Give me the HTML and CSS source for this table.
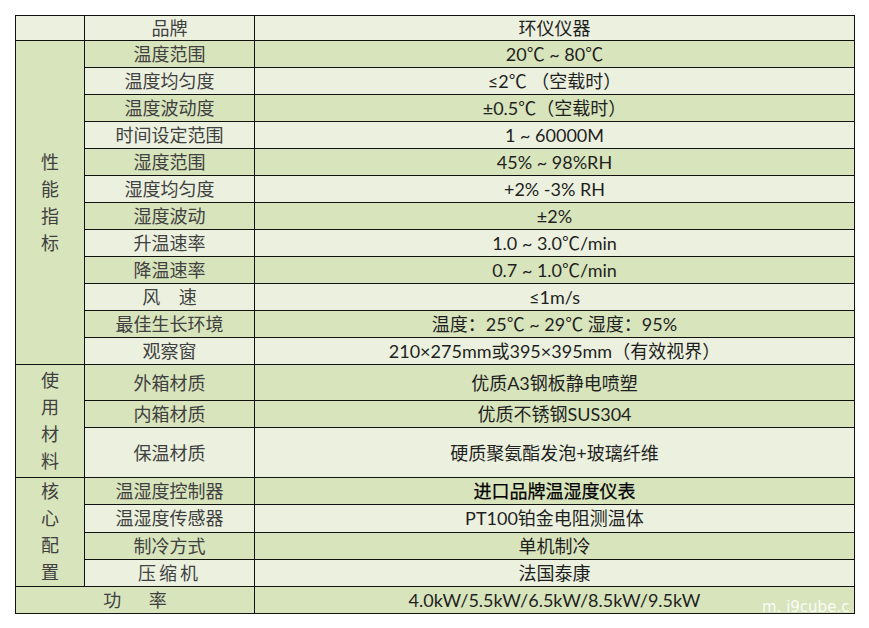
FILE: index.html
```html
<!DOCTYPE html>
<html lang="zh">
<head>
<meta charset="utf-8">
<link rel="stylesheet" href="styles.css">
</head>
<body>
<div class="page">
<table class="spec">
  <colgroup><col class="c1"><col class="c2"><col class="c3"></colgroup>
  <tr class="h25 lt"><td class="grp"></td><td class="lbl">品牌</td><td class="val">环仪仪器</td></tr>
  <tr class="dk"><td class="grp" rowspan="12"><div class="stack"><span>性</span><span>能</span><span>指</span><span>标</span></div></td><td class="lbl">温度范围</td><td class="val">20℃ ~ 80℃</td></tr>
  <tr class="lt"><td class="lbl">温度均匀度</td><td class="val">≤2℃ （空载时）</td></tr>
  <tr class="dk"><td class="lbl">温度波动度</td><td class="val">±0.5℃（空载时）</td></tr>
  <tr class="lt"><td class="lbl">时间设定范围</td><td class="val">1 ~ 60000M</td></tr>
  <tr class="dk"><td class="lbl">湿度范围</td><td class="val">45% ~ 98%RH</td></tr>
  <tr class="lt"><td class="lbl">湿度均匀度</td><td class="val">+2% -3% RH</td></tr>
  <tr class="dk"><td class="lbl">湿度波动</td><td class="val">±2%</td></tr>
  <tr class="lt"><td class="lbl">升温速率</td><td class="val">1.0 ~ 3.0℃/min</td></tr>
  <tr class="dk"><td class="lbl">降温速率</td><td class="val">0.7 ~ 1.0℃/min</td></tr>
  <tr class="lt"><td class="lbl">风&nbsp;&nbsp;&nbsp;&nbsp;速</td><td class="val">≤1m/s</td></tr>
  <tr class="dk"><td class="lbl">最佳生长环境</td><td class="val">温度：25℃ ~ 29℃ 湿度：95%</td></tr>
  <tr class="lt"><td class="lbl">观察窗</td><td class="val">210×275mm或395×395mm（有效视界）</td></tr>
  <tr class="dk h36"><td class="grp" rowspan="3"><div class="stack"><span>使</span><span>用</span><span>材</span><span>料</span></div></td><td class="lbl">外箱材质</td><td class="val">优质A3钢板静电喷塑</td></tr>
  <tr class="dk"><td class="lbl">内箱材质</td><td class="val">优质不锈钢SUS304</td></tr>
  <tr class="lt h50"><td class="lbl">保温材质</td><td class="val">硬质聚氨酯发泡+玻璃纤维</td></tr>
  <tr class="dk"><td class="grp" rowspan="4"><div class="stack"><span>核</span><span>心</span><span>配</span><span>置</span></div></td><td class="lbl">温湿度控制器</td><td class="val strong">进口品牌温湿度仪表</td></tr>
  <tr class="lt"><td class="lbl">温湿度传感器</td><td class="val">PT100铂金电阻测温体</td></tr>
  <tr class="dk"><td class="lbl">制冷方式</td><td class="val">单机制冷</td></tr>
  <tr class="lt"><td class="lbl spaced">压缩机</td><td class="val">法国泰康</td></tr>
  <tr class="dk"><td class="lbl" colspan="2">功&nbsp;&nbsp;&nbsp;&nbsp;&nbsp;&nbsp;率</td><td class="val">4.0kW/5.5kW/6.5kW/8.5kW/9.5kW</td></tr>
</table>
<div class="mark">m. i9cube.c</div>
</div>
</body>
</html>
```

FILE: styles.css
```css
html, body {
  margin: 0;
  padding: 0;
  background: #ffffff;
}

.page {
  position: relative;
  width: 869px;
  height: 628px;
  padding: 15px 0 0 15px;
  box-sizing: border-box;
  overflow: hidden;
}

.spec {
  border-collapse: collapse;
  table-layout: fixed;
  width: 839px;
  font-family: Lato, "Noto Sans CJK SC", sans-serif;
  font-size: 18px;
  color: #222222;
}

.c1 { width: 69px; }
.c2 { width: 170px; }
.c3 { width: 600px; }

.spec td {
  border: 1px solid #111111;
  padding: 0;
  height: 26px;
  line-height: 20px;
  text-align: center;
  vertical-align: middle;
  white-space: nowrap;
  overflow: hidden;
}

.spec tr.h25 td { height: 24px; }
.spec tr.h36 td { height: 35px; }
.spec tr.h50 td { height: 49px; }

.dk td { background: #d8e4bc; }
.lt td { background: #ebf1de; }
.spec td.grp { background: #d8e4bc; }
.spec tr.h25 td.grp { background: #ebf1de; }

.lbl {
  color: #404040;
}

.val {
  color: #1f1f1f;
}

.strong {
  color: #000000;
  -webkit-text-stroke: 0.25px #000000;
}

.spaced {
  letter-spacing: 3px;
}

.stack {
  display: flex;
  flex-direction: column;
  align-items: center;
  color: #404040;
}

.stack span {
  display: block;
  height: 27px;
  line-height: 27px;
}

.mark {
  position: absolute;
  left: 762px;
  top: 598px;
  color: #ffffff;
  font-family: "DejaVu Sans", sans-serif;
  font-size: 15px;
  white-space: nowrap;
  opacity: 0.9;
}
```
